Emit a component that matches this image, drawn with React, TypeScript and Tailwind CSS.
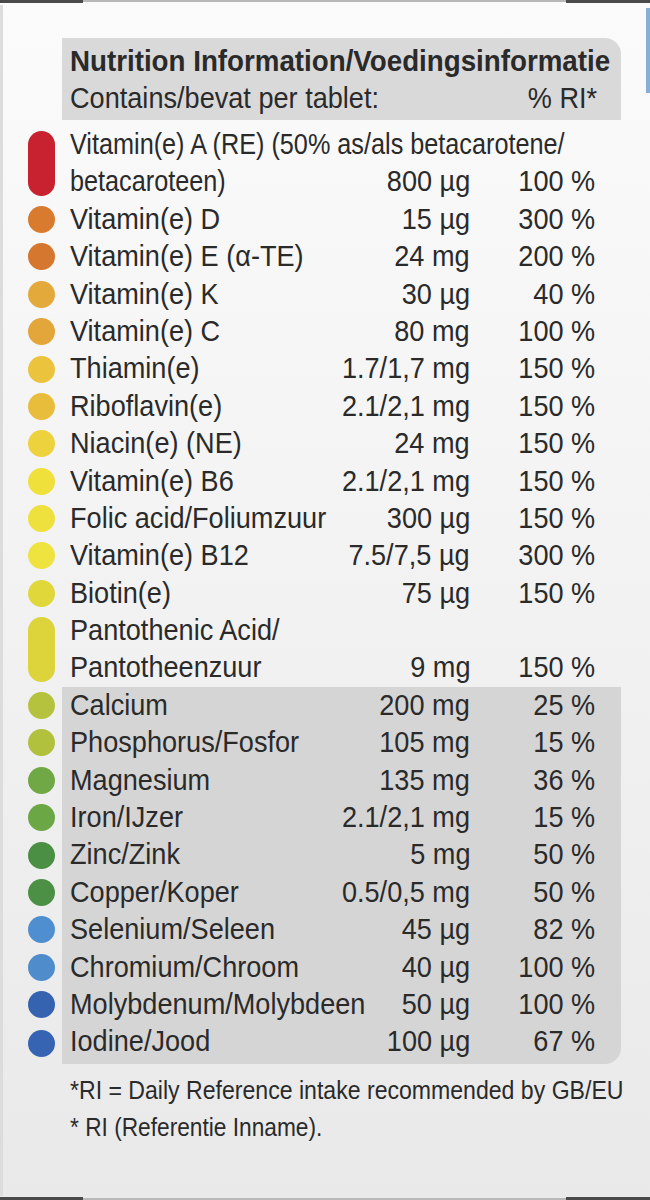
import React from "react";

type Row = { name: string; amt: string; pct: string; color: string };

const vitamins: Row[] = [
  { name: "Vitamin(e) D", amt: "15 µg", pct: "300 %", color: "#d97b2f" },
  { name: "Vitamin(e) E (α-TE)", amt: "24 mg", pct: "200 %", color: "#d5772f" },
  { name: "Vitamin(e) K", amt: "30 µg", pct: "40 %", color: "#e3aa3b" },
  { name: "Vitamin(e) C", amt: "80 mg", pct: "100 %", color: "#e2a63a" },
  { name: "Thiamin(e)", amt: "1.7/1,7 mg", pct: "150 %", color: "#ebc33c" },
  { name: "Riboflavin(e)", amt: "2.1/2,1 mg", pct: "150 %", color: "#e9bd3c" },
  { name: "Niacin(e) (NE)", amt: "24 mg", pct: "150 %", color: "#edd23d" },
  { name: "Vitamin(e) B6", amt: "2.1/2,1 mg", pct: "150 %", color: "#efe03b" },
  { name: "Folic acid/Foliumzuur", amt: "300 µg", pct: "150 %", color: "#eee13d" },
  { name: "Vitamin(e) B12", amt: "7.5/7,5 µg", pct: "300 %", color: "#efe33f" },
  { name: "Biotin(e)", amt: "75 µg", pct: "150 %", color: "#e0d73b" },
];

const minerals: Row[] = [
  { name: "Calcium", amt: "200 mg", pct: "25 %", color: "#b5c23d" },
  { name: "Phosphorus/Fosfor", amt: "105 mg", pct: "15 %", color: "#b1c03d" },
  { name: "Magnesium", amt: "135 mg", pct: "36 %", color: "#70a846" },
  { name: "Iron/IJzer", amt: "2.1/2,1 mg", pct: "15 %", color: "#6ba745" },
  { name: "Zinc/Zink", amt: "5 mg", pct: "50 %", color: "#4a8f43" },
  { name: "Copper/Koper", amt: "0.5/0,5 mg", pct: "50 %", color: "#4b9044" },
  { name: "Selenium/Seleen", amt: "45 µg", pct: "82 %", color: "#4f8fcf" },
  { name: "Chromium/Chroom", amt: "40 µg", pct: "100 %", color: "#4e8ccc" },
  { name: "Molybdenum/Molybdeen", amt: "50 µg", pct: "100 %", color: "#3563b0" },
  { name: "Iodine/Jood", amt: "100 µg", pct: "67 %", color: "#3664b2" },
];

const font = {
  fontFamily: '"Liberation Sans", Arial, sans-serif',
};

function TL({ children, tight }: { children: React.ReactNode; tight?: boolean }) {
  return (
    <span
      className={
        tight
          ? "inline-block origin-left scale-x-[0.87] whitespace-nowrap"
          : "inline-block origin-left scale-x-[0.935] whitespace-nowrap"
      }
    >
      {children}
    </span>
  );
}

function TR({ children }: { children: React.ReactNode }) {
  return <span className="inline-block origin-right scale-x-[0.935] whitespace-nowrap">{children}</span>;
}

function Dot({ color, tall }: { color: string; tall?: boolean }) {
  return (
    <div
      className={tall ? "w-[27px] h-[65px] rounded-full shrink-0" : "w-[27px] h-[27px] rounded-full shrink-0"}
      style={{ backgroundColor: color }}
    />
  );
}

function Line({ name, amt, pct, tight }: { name: string; amt: string; pct: string; tight?: boolean }) {
  return (
    <div className="flex h-[37.4px] items-center pr-[26px] pl-[8px]">
      <div className="flex-1 min-w-0 whitespace-nowrap">
        <TL tight={tight}>{name}</TL>
      </div>
      <div className="w-[140px] shrink-0 text-right whitespace-nowrap">
        <TR>{amt}</TR>
      </div>
      <div className="w-[125px] shrink-0 text-right whitespace-nowrap">
        <TR>{pct}</TR>
      </div>
    </div>
  );
}

function RowView({ r, shaded, last }: { r: Row; shaded?: boolean; last?: boolean }) {
  return (
    <div className="flex items-center">
      <Dot color={r.color} />
      <div
        className={
          "ml-[7px] w-[559px] " +
          (shaded ? "bg-[#d5d5d5] " : "") +
          (last ? "rounded-br-[16px] pb-[3px]" : "")
        }
      >
        <Line name={r.name} amt={r.amt} pct={r.pct} />
      </div>
    </div>
  );
}

export default function App() {
  return (
    <div
      className="w-[650px] h-[1200px] flex flex-col bg-gradient-to-b from-[#fbfbfb] to-[#e9e9e9] text-[#2a2a2a] text-[29px] leading-[37.4px]"
      style={font}
    >
      <div className="flex h-[5px] items-start">
        <div className="w-[83px] h-[3px] bg-[#4a4a4a]" />
        <div className="flex-1 h-[2px] bg-[#b8b8b8]" />
        <div className="w-[84px] h-[3px] bg-[#4a4a4a]" />
      </div>
      <div className="flex flex-1">
        <div className="w-[3px] bg-[#dcdcdc]" />
        <div className="flex-1 flex flex-col pl-[25px]">
          <div className="ml-[34px] mt-[33px] w-[559px] bg-[#d9d9d9] rounded-tr-[16px] pt-[5px] pb-[3px]">
            <div className="pl-[8px] h-[37px] flex items-center font-bold whitespace-nowrap">
              <span className="inline-block origin-left scale-x-[0.956] whitespace-nowrap">
                Nutrition Information/Voedingsinformatie
              </span>
            </div>
            <div className="pl-[8px] pr-[24px] h-[37px] flex items-center justify-between whitespace-nowrap">
              <TL>Contains/bevat per tablet:</TL>
              <TR>% RI*</TR>
            </div>
          </div>

          <div className="mt-[6px] flex items-center">
            <Dot color="#c8212f" tall />
            <div className="ml-[7px] w-[559px]">
              <div className="pl-[8px] h-[37.4px] flex items-center whitespace-nowrap">
                <TL tight>Vitamin(e) A (RE) (50% as/als betacarotene/</TL>
              </div>
              <Line name="betacaroteen)" amt="800 µg" pct="100 %" tight />
            </div>
          </div>

          {vitamins.map((r) => (
            <RowView key={r.name} r={r} />
          ))}

          <div className="flex items-center">
            <Dot color="#ddd43b" tall />
            <div className="ml-[7px] w-[559px]">
              <div className="pl-[8px] h-[37.4px] flex items-center whitespace-nowrap">
                <TL>Pantothenic Acid/</TL>
              </div>
              <Line name="Pantotheenzuur" amt="9 mg" pct="150 %" />
            </div>
          </div>

          {minerals.map((r, i) => (
            <RowView key={r.name} r={r} shaded last={i === minerals.length - 1} />
          ))}

          <div className="ml-[42px] mt-[8px] w-[560px] whitespace-nowrap text-[25.5px]">
            <div className="h-[37px] flex items-center">
              <span className="inline-block origin-left scale-x-[0.905] whitespace-nowrap">
                *RI = Daily Reference intake recommended by GB/EU
              </span>
            </div>
            <div className="h-[37px] flex items-center">
              <span className="inline-block origin-left scale-x-[0.89] whitespace-nowrap">
                * RI (Referentie Inname).
              </span>
            </div>
          </div>
        </div>
        <div className="w-[4px] flex flex-col pt-[3px]">
          <div className="h-[85px] bg-[#86b0da]" />
        </div>
      </div>
      <div className="flex h-[4px] items-end">
        <div className="w-[83px] h-[3px] bg-[#4a4a4a]" />
        <div className="flex-1 h-[2px] bg-[#b8b8b8]" />
        <div className="w-[84px] h-[3px] bg-[#4a4a4a]" />
      </div>
    </div>
  );
}
